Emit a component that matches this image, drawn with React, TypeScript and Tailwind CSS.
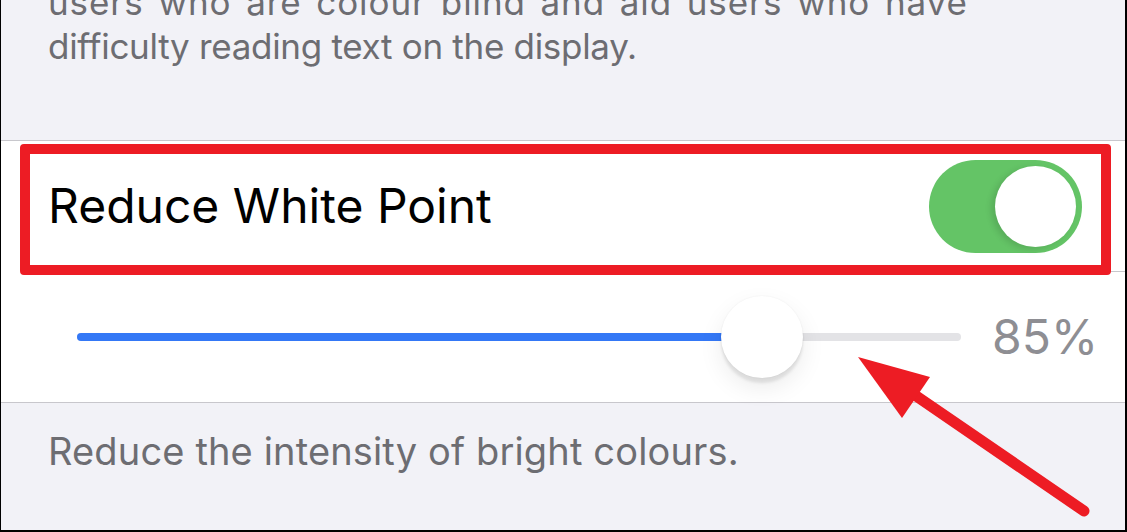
import React from "react";

const font = { fontFamily: "Inter, 'Noto Sans', sans-serif" };

const Toggle: React.FC<{ on: boolean }> = ({ on }) => (
  <div
    className={`relative flex h-[93px] w-[153px] shrink-0 items-center rounded-full p-[6px] ${
      on ? "justify-end bg-[#64c466]" : "justify-start bg-[#e9e9eb]"
    }`}
  >
    <div className="h-[81px] w-[81px] rounded-full bg-white shadow-[-4px_2px_6px_rgba(0,0,0,0.12)]" />
  </div>
);

const Slider: React.FC<{ value: number }> = ({ value }) => (
  <div className="relative h-[8px] w-[884px] rounded-full bg-[#e3e3e6]">
    <div
      className="h-full rounded-full bg-[#3478f6]"
      style={{ width: `${value}px` }}
    />
    {/* thumb */}
    <div
      className="absolute top-1/2 h-[82px] w-[82px] -translate-x-1/2 -translate-y-1/2 rounded-full bg-white shadow-[0_5px_3px_rgba(0,0,0,0.09),0_10px_24px_rgba(0,0,0,0.08),0_0_2px_rgba(0,0,0,0.06)]"
      style={{ left: `${value}px` }}
    />
  </div>
);

export default function App() {
  return (
    <div
      style={font}
      className="relative h-[532px] w-[1127px] overflow-hidden border-b-2 border-l border-r-2 border-black bg-[#f2f2f7]"
    >
      {/* group footer from the section above */}
      <div className="h-[140px] overflow-hidden pl-[47px] pr-6">
        <p className="-mt-[20px] whitespace-nowrap text-[35px] leading-[44px] tracking-[-0.3px] text-[#6d6d72]">
          <span className="tracking-[0.9px] [word-spacing:4px]">
            users who are colour blind and aid users who have
          </span>
          <br />
          difficulty reading text on the display.
        </p>
      </div>
      <div className="h-px bg-[#c8c7cc]" />

      {/* toggle row */}
      <div className="flex h-[130px] items-center justify-between bg-white pl-[47px] pr-[43px]">
        <span className="text-[48px] text-black">Reduce White Point</span>
        <Toggle on />
      </div>
      <div className="bg-white pl-[47px]">
        <div className="h-px bg-[#c8c7cc]" />
      </div>

      {/* slider row */}
      <div className="flex h-[130px] items-center bg-white pl-[76px]">
        <Slider value={685} />
        <span className="ml-[31px] text-[48px] text-[#8e8e93]">85%</span>
      </div>
      <div className="h-px bg-[#c8c7cc]" />

      {/* footer */}
      <p className="pl-[47px] pt-[26px] text-[38px] leading-[44px] tracking-[0.15px] text-[#6d6d72]">
        Reduce the intensity of bright colours.
      </p>

      {/* annotation: red box */}
      <div className="pointer-events-none absolute left-[19px] top-[144px] h-[131px] w-[1091px] rounded-[4px] border-[10px] border-[#ed1c24]" />

      {/* annotation: arrow */}
      <svg
        className="pointer-events-none absolute left-0 top-0"
        width="1127"
        height="532"
        viewBox="0 0 1127 532"
      >
        <line
          x1="1083"
          y1="511"
          x2="905"
          y2="389"
          stroke="#ed1c24"
          strokeWidth="11"
          strokeLinecap="round"
        />
        <polygon points="857,357 929,377 901,418" fill="#ed1c24" />
      </svg>
    </div>
  );
}
